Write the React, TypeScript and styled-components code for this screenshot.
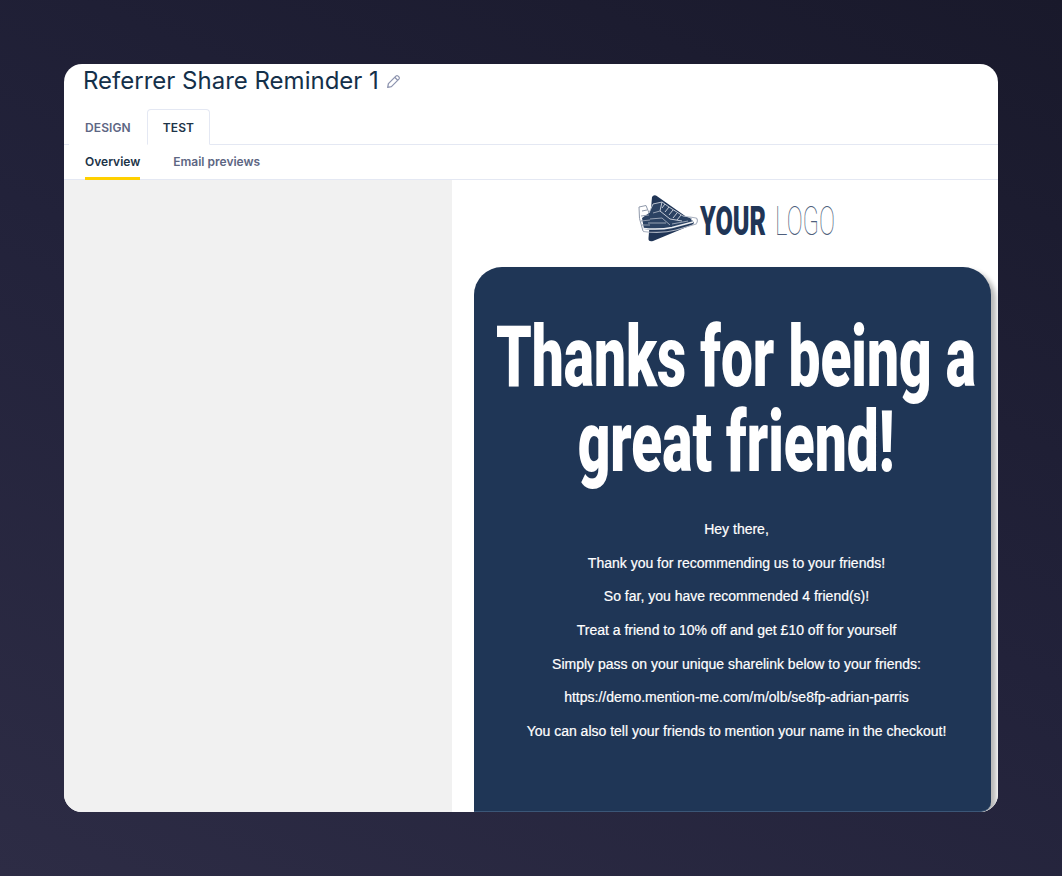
import React, { ReactElement } from 'react'
import styled, { createGlobalStyle } from 'styled-components'

const GlobalStyle = createGlobalStyle`
  html, body {
    margin: 0;
    padding: 0;
    height: 100%;
  }
  body {
    font-family: Inter, "Liberation Sans", sans-serif;
    background: #1f1e33;
  }
`

const Page = styled.div`
  box-sizing: border-box;
  width: 1062px;
  height: 876px;
  padding: 64px;
  overflow: hidden;
  background: linear-gradient(205deg, #19192b 0%, #22223a 50%, #2d2c45 100%);
`

const Window = styled.div`
  width: 934px;
  height: 748px;
  background: #fff;
  border-radius: 18px;
  overflow: hidden;
  display: flex;
  flex-direction: column;
`

const Header = styled.header`
  flex: none;
  height: 81px;
  display: flex;
  flex-direction: column;
  justify-content: space-between;
  border-bottom: 1px solid #e4e8f3;
  box-sizing: border-box;
`

const TitleRow = styled.div`
  display: flex;
  align-items: center;
  gap: 7px;
  padding-left: 19px;
  height: 34px;
`

const Title = styled.h1`
  margin: 0;
  font-size: 24px;
  font-weight: 400;
  line-height: 34px;
  color: #14304a;
  white-space: nowrap;
`

const Tabs = styled.nav`
  display: flex;
  height: 36px;
  padding-left: 5px;
  margin-bottom: -1px;
`

const Tab = styled.div<{ $active?: boolean }>`
  box-sizing: border-box;
  height: 36px;
  padding: 0 15px;
  display: flex;
  align-items: center;
  font-size: 12px;
  font-weight: 600;
  letter-spacing: 0.1px;
  color: ${({ $active }) => ($active ? '#1d3448' : '#5d6683')};
  background: #fff;
  border: 1px solid ${({ $active }) => ($active ? '#e4e8f3' : 'transparent')};
  border-bottom-color: ${({ $active }) => ($active ? '#fff' : 'transparent')};
  border-radius: 4px 4px 0 0;
`

const SubNav = styled.nav`
  flex: none;
  height: 35px;
  box-sizing: border-box;
  display: flex;
  gap: 33px;
  padding-left: 21px;
  border-bottom: 1px solid #e4e8f3;
`

const SubLink = styled.div<{ $active?: boolean }>`
  height: 35px;
  box-sizing: border-box;
  line-height: 34px;
  font-size: 12px;
  font-weight: 600;
  color: ${({ $active }) => ($active ? '#1d3448' : '#5d6683')};
  border-bottom: 3px solid ${({ $active }) => ($active ? '#ffd000' : 'transparent')};
`

const Body = styled.div`
  flex: 1;
  min-height: 0;
  display: flex;
`

const SidePane = styled.aside`
  flex: none;
  width: 388px;
  background: #f1f1f1;
`

const Preview = styled.main`
  flex: 1;
  min-width: 0;
  background: #fff;
  padding-left: 22px;
  display: flex;
  flex-direction: column;
  overflow: hidden;
`

const LogoRow = styled.div`
  flex: none;
  height: 87px;
  width: 524px;
  display: flex;
  justify-content: center;
  align-items: flex-start;
  padding-top: 14px;
  box-sizing: border-box;
`

const LogoWord = styled.div`
  display: flex;
  align-items: center;
  height: 50px;
  margin: 3px 0 0 2px;
  width: 136px;
  white-space: nowrap;
  font-family: Roboto, "Liberation Sans", sans-serif;
  font-size: 40px;
  line-height: 50px;
  color: #203556;
`

const LogoStrong = styled.span`
  display: inline-block;
  font-weight: 900;
  transform: scaleX(0.63);
  transform-origin: left center;
  width: 75px;
`

const LogoThin = styled.span`
  display: inline-block;
  font-weight: 100;
  color: #4f5f7c;
  transform: scaleX(0.6);
  transform-origin: left center;
`

const Card = styled.section`
  flex: 1;
  width: 517px;
  box-sizing: border-box;
  background: #1f3656;
  border-radius: 28px 28px 10px 0;
  border-bottom: 1px solid #3b5677;
  box-shadow: 5px 4px 5px rgba(0, 0, 0, 0.28);
  padding: 47px 0 0 8px;
  color: #fff;
  text-align: center;
`

const Headline = styled.h2`
  width: 800px;
  margin: 0 0 36px -146px;
  font-family: Roboto, "Liberation Sans", sans-serif;
  font-size: 86px;
  line-height: 85px;
  font-weight: 900;
  transform: scaleX(0.66);
`

const Paragraph = styled.p`
  margin: 0 0 15.67px;
  font-family: "Liberation Sans", Arial, sans-serif;
  font-size: 14px;
  line-height: 18px;
  color: #fff;
  -webkit-text-stroke: 0.2px #fff;
`

const PencilIcon = () => (
  <svg width="15" height="15" viewBox="0 0 15 15" fill="none" stroke="#8f96b0" strokeWidth="1.3" strokeLinejoin="round">
    <path d="M2.4 9.6 9.9 2.1a1.6 1.6 0 0 1 2.2 0l.8.8a1.6 1.6 0 0 1 0 2.2l-7.5 7.5-3.7.8z" />
    <path d="M8.7 3.3 11.7 6.3" />
  </svg>
)

const LogoMark = () => (
  <svg width="62" height="50" viewBox="0 0 62 50" fill="none">
    <path d="M16 3 Q18 0 21.5 2.5 L52 24 L58 30 L17 47 Q12 48 12.5 44 Z" fill="#203556" />
    <path d="M13 19 L17 10 L26 8 L47 22 L55 24 L58 29 L38 35 Q22 38 8 35 L6 24 Z" fill="#2b4263" />
    <path d="M3 13 L10 11.5 L13 19 M3 13 Q2 24 7 37 M6 17 L11 16 M5 22 L13 21 M5 27 L14 26 M6 31 L14 31" stroke="#8e98aa" strokeWidth="1" />
    <path d="M7 37.5 Q26 40 40 36 L60 30 Q63 26 60 24 L54 23" stroke="#aab2c0" strokeWidth="1.2" />
    <path d="M7 34.5 Q24 36 36 33.5 L57 28" stroke="#eceef2" strokeWidth="1.5" />
    <path d="M13 19 L17 10 L26 8 L33 13 L47 22 L54 23 L57 28" stroke="#b9c1ce" strokeWidth="1" />
    <path d="M26 8 L24 17 L34 25 L46 27 M29 10 L26 14 M33 13 L29 18 M37 16 L33 21 M41 19 L37 24 M45 21 L41 26" stroke="#c6ccd8" strokeWidth="1" />
    <path d="M14 25 L26 24 L34 31 M12 29 L30 29 M17 19 L24 17 M36 30 L52 27" stroke="#98a3b5" strokeWidth="1" />
  </svg>
)

const lines: string[] = [
  'Hey there,',
  'Thank you for recommending us to your friends!',
  'So far, you have recommended 4 friend(s)!',
  'Treat a friend to 10% off and get £10 off for yourself',
  'Simply pass on your unique sharelink below to your friends:',
  'https://demo.mention-me.com/m/olb/se8fp-adrian-parris',
  'You can also tell your friends to mention your name in the checkout!',
]

const App = (): ReactElement => (
  <>
    <GlobalStyle />
    <Page>
      <Window>
        <Header>
          <TitleRow>
            <Title>Referrer Share Reminder 1</Title>
            <PencilIcon />
          </TitleRow>
          <Tabs>
            <Tab>DESIGN</Tab>
            <Tab $active>TEST</Tab>
          </Tabs>
        </Header>
        <SubNav>
          <SubLink $active>Overview</SubLink>
          <SubLink>Email previews</SubLink>
        </SubNav>
        <Body>
          <SidePane />
          <Preview>
            <LogoRow>
              <LogoMark />
              <LogoWord>
                <LogoStrong>YOUR</LogoStrong>
                <LogoThin>LOGO</LogoThin>
              </LogoWord>
            </LogoRow>
            <Card>
              <Headline>Thanks for being a<br />great friend!</Headline>
              {lines.map((line) => (
                <Paragraph key={line}>{line}</Paragraph>
              ))}
            </Card>
          </Preview>
        </Body>
      </Window>
    </Page>
  </>
)

export default App
